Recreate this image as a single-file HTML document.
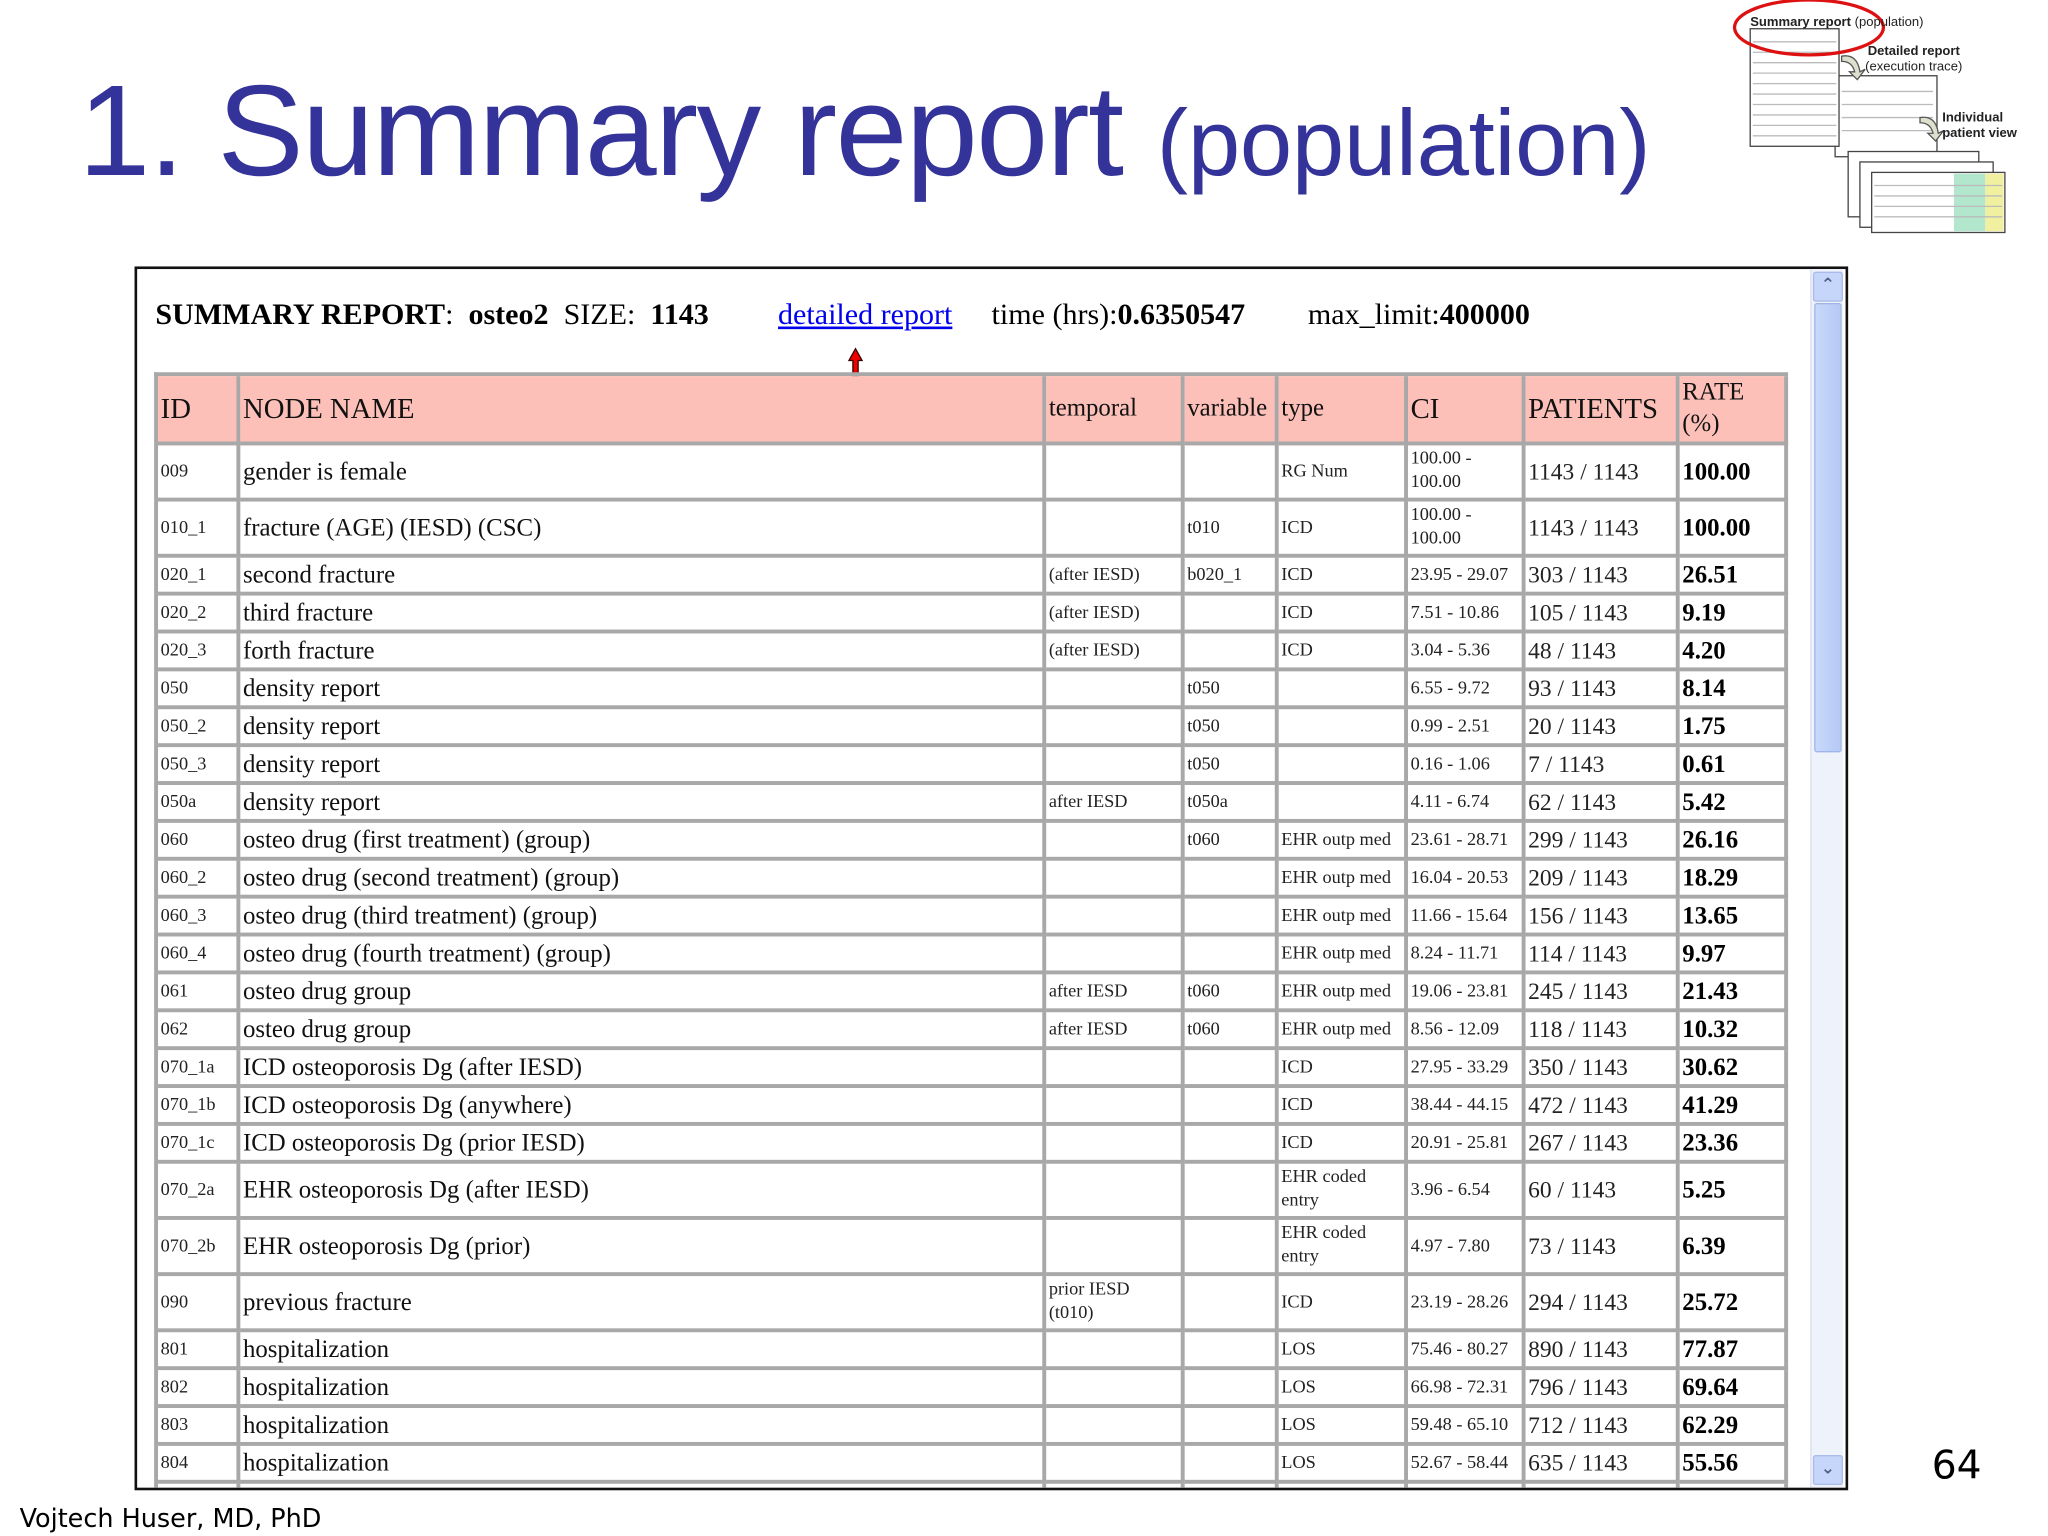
<!DOCTYPE html>
<html><head><meta charset="utf-8"><style>
html,body{margin:0;padding:0;background:#fff;}
body{width:2048px;height:1536px;overflow:hidden;position:relative;}
#w{position:absolute;left:0;top:0;width:1568px;height:1176px;transform:scale(1.306122);transform-origin:0 0;}
.t1{position:absolute;left:60px;top:43px;font-family:"Liberation Sans",sans-serif;color:#333399;font-size:99px;white-space:nowrap;letter-spacing:-1.2px;}
.t1 span{font-size:72px;letter-spacing:-0.2px;}
#frame{position:absolute;left:103px;top:204px;width:1308px;height:933px;border:2px solid #111;overflow:hidden;background:#fff;}
#sb{position:absolute;right:2px;top:0;width:24px;height:933px;background:#eef2fb;border-left:1px solid #dde;}
#sb .thumb{position:absolute;left:2px;top:26px;width:19px;height:342px;background:linear-gradient(90deg,#c9d8fb,#b5c9f5);border:1px solid #9fb4e8;border-radius:2px;}
#sb .btn{position:absolute;left:1px;width:21px;height:21px;background:#c6d6fa;border:1px solid #a9bbe8;border-radius:2px;color:#4d6185;font:bold 13px "DejaVu Sans",sans-serif;text-align:center;line-height:20px;}
.hdr{position:absolute;left:14px;top:22px;font-family:"Liberation Serif",serif;font-size:23px;white-space:nowrap;color:#000;}
.hdr a{color:#00e;text-decoration:underline;}
.hdr i{font-style:normal;display:inline-block;}
table{position:absolute;left:13px;top:79px;border-collapse:separate;border-spacing:0;table-layout:fixed;width:1248px;font-family:"Liberation Serif",serif;border-top:3px solid #a8a8a8;border-left:3px solid #a8a8a8;}
td{border-right:3px solid #a8a8a8;border-bottom:3px solid #a8a8a8;padding:0 2px;vertical-align:middle;white-space:nowrap;overflow:hidden;font-size:14px;line-height:17px;color:#222;}
tr.h td{background:#fcc0b8;height:50px;font-size:22px;line-height:24px;color:#111;}
tr.h td.s{font-size:19px;}
tr.n td{height:26px;}
tr.t td{height:40px;}
td.nm{font-size:19px;color:#111;}
td.pt{font-size:18px;color:#222;}
td.rt{font-size:19px;font-weight:bold;color:#000;}
td.ci{font-size:14px;white-space:normal;line-height:18px;}
.foot{position:absolute;left:15px;top:1151px;font-family:"DejaVu Sans",sans-serif;font-size:19.5px;color:#000;}
.pg{position:absolute;left:1479px;top:1105px;font-family:"DejaVu Sans",sans-serif;font-size:30px;color:#000;}
</style></head><body><div id="w">
<div class="t1">1. Summary report <span>(population)</span></div>

<svg style="position:absolute;left:1320px;top:0" width="248" height="185" viewBox="0 0 248 185">
<g stroke="#444" fill="#fff">
<rect x="85" y="58" width="78" height="62"/>
<rect x="95" y="116" width="100" height="50"/>
<rect x="104" y="124" width="102" height="50"/>
<rect x="113" y="132" width="102" height="46"/>
<rect x="20" y="22" width="68" height="90"/>
</g>
<rect x="176" y="133" width="24" height="44" fill="#9fe0c0" opacity=".8"/>
<rect x="200" y="133" width="14" height="44" fill="#f0f0a0"/>
<g stroke="#bbb" stroke-width="1">
<line x1="22" y1="32" x2="86" y2="32"/><line x1="22" y1="40" x2="86" y2="40"/><line x1="22" y1="48" x2="86" y2="48"/><line x1="22" y1="56" x2="86" y2="56"/><line x1="22" y1="64" x2="86" y2="64"/><line x1="22" y1="72" x2="86" y2="72"/><line x1="22" y1="80" x2="86" y2="80"/><line x1="22" y1="88" x2="86" y2="88"/><line x1="22" y1="96" x2="86" y2="96"/><line x1="22" y1="104" x2="86" y2="104"/>
<line x1="90" y1="70" x2="160" y2="70"/><line x1="90" y1="80" x2="160" y2="80"/><line x1="90" y1="90" x2="160" y2="90"/><line x1="90" y1="100" x2="160" y2="100"/>
<line x1="115" y1="142" x2="213" y2="142"/><line x1="115" y1="150" x2="213" y2="150"/><line x1="115" y1="158" x2="213" y2="158"/><line x1="115" y1="166" x2="213" y2="166"/>
</g>
<path d="M90 43 q12 -2 14 12 l4 -2 -6 8 -6 -6 4 0 q-2 -8 -10 -8z" fill="#dde0cc" stroke="#555"/>
<path d="M150 90 q12 -2 14 12 l4 -2 -6 8 -6 -6 4 0 q-2 -8 -10 -8z" fill="#dde0cc" stroke="#555"/>
<ellipse cx="65" cy="21" rx="57" ry="21" fill="none" stroke="#d11" stroke-width="2.5"/>
<text x="20" y="20" font-family="Liberation Sans,sans-serif" font-size="10" font-weight="bold" fill="#222">Summary report <tspan font-weight="normal">(population)</tspan></text>
<text x="110" y="42" font-family="Liberation Sans,sans-serif" font-size="10" font-weight="bold" fill="#222">Detailed report</text>
<text x="108" y="54" font-family="Liberation Sans,sans-serif" font-size="10" fill="#222">(execution trace)</text>
<text x="167" y="93" font-family="Liberation Sans,sans-serif" font-size="10" font-weight="bold" fill="#222">Individual</text>
<text x="167" y="105" font-family="Liberation Sans,sans-serif" font-size="10" font-weight="bold" fill="#222">patient view</text>
</svg>

<div id="frame">
<div class="hdr"><b>SUMMARY REPORT</b>:&nbsp; <b>osteo2</b>&nbsp; SIZE:&nbsp; <b>1143</b><i style="width:53px"></i><a>detailed report</a><i style="width:30px"></i>time (hrs):<b>0.6350547</b><i style="width:48px"></i>max_limit:<b>400000</b></div>
<svg style="position:absolute;left:543px;top:60px" width="14" height="28"><path d="M7 1 L12 10 L9 10 L9 27 L5 27 L5 10 L2 10 Z" fill="#e00" stroke="#300" stroke-width="1"/></svg>
<table>
<colgroup><col style="width:63px"><col style="width:617px"><col style="width:106px"><col style="width:72px"><col style="width:99px"><col style="width:90px"><col style="width:118px"><col style="width:83px"></colgroup>
<tr class="h"><td>ID</td><td>NODE NAME</td><td class="s">temporal</td><td class="s">variable</td><td class="s">type</td><td>CI</td><td>PATIENTS</td><td class="s" style="white-space:normal">RATE (%)</td></tr>
<tr class="t"><td>009</td><td class="nm">gender is female</td><td></td><td></td><td>RG Num</td><td class="ci">100.00 - 100.00</td><td class="pt">1143 / 1143</td><td class="rt">100.00</td></tr>
<tr class="t"><td>010_1</td><td class="nm">fracture (AGE) (IESD) (CSC)</td><td></td><td>t010</td><td>ICD</td><td class="ci">100.00 - 100.00</td><td class="pt">1143 / 1143</td><td class="rt">100.00</td></tr>
<tr class="n"><td>020_1</td><td class="nm">second fracture</td><td>(after IESD)</td><td>b020_1</td><td>ICD</td><td>23.95 - 29.07</td><td class="pt">303 / 1143</td><td class="rt">26.51</td></tr>
<tr class="n"><td>020_2</td><td class="nm">third fracture</td><td>(after IESD)</td><td></td><td>ICD</td><td>7.51 - 10.86</td><td class="pt">105 / 1143</td><td class="rt">9.19</td></tr>
<tr class="n"><td>020_3</td><td class="nm">forth fracture</td><td>(after IESD)</td><td></td><td>ICD</td><td>3.04 - 5.36</td><td class="pt">48 / 1143</td><td class="rt">4.20</td></tr>
<tr class="n"><td>050</td><td class="nm">density report</td><td></td><td>t050</td><td></td><td>6.55 - 9.72</td><td class="pt">93 / 1143</td><td class="rt">8.14</td></tr>
<tr class="n"><td>050_2</td><td class="nm">density report</td><td></td><td>t050</td><td></td><td>0.99 - 2.51</td><td class="pt">20 / 1143</td><td class="rt">1.75</td></tr>
<tr class="n"><td>050_3</td><td class="nm">density report</td><td></td><td>t050</td><td></td><td>0.16 - 1.06</td><td class="pt">7 / 1143</td><td class="rt">0.61</td></tr>
<tr class="n"><td>050a</td><td class="nm">density report</td><td>after IESD</td><td>t050a</td><td></td><td>4.11 - 6.74</td><td class="pt">62 / 1143</td><td class="rt">5.42</td></tr>
<tr class="n"><td>060</td><td class="nm">osteo drug (first treatment) (group)</td><td></td><td>t060</td><td>EHR outp med</td><td>23.61 - 28.71</td><td class="pt">299 / 1143</td><td class="rt">26.16</td></tr>
<tr class="n"><td>060_2</td><td class="nm">osteo drug (second treatment) (group)</td><td></td><td></td><td>EHR outp med</td><td>16.04 - 20.53</td><td class="pt">209 / 1143</td><td class="rt">18.29</td></tr>
<tr class="n"><td>060_3</td><td class="nm">osteo drug (third treatment) (group)</td><td></td><td></td><td>EHR outp med</td><td>11.66 - 15.64</td><td class="pt">156 / 1143</td><td class="rt">13.65</td></tr>
<tr class="n"><td>060_4</td><td class="nm">osteo drug (fourth treatment) (group)</td><td></td><td></td><td>EHR outp med</td><td>8.24 - 11.71</td><td class="pt">114 / 1143</td><td class="rt">9.97</td></tr>
<tr class="n"><td>061</td><td class="nm">osteo drug group</td><td>after IESD</td><td>t060</td><td>EHR outp med</td><td>19.06 - 23.81</td><td class="pt">245 / 1143</td><td class="rt">21.43</td></tr>
<tr class="n"><td>062</td><td class="nm">osteo drug group</td><td>after IESD</td><td>t060</td><td>EHR outp med</td><td>8.56 - 12.09</td><td class="pt">118 / 1143</td><td class="rt">10.32</td></tr>
<tr class="n"><td>070_1a</td><td class="nm">ICD osteoporosis Dg (after IESD)</td><td></td><td></td><td>ICD</td><td>27.95 - 33.29</td><td class="pt">350 / 1143</td><td class="rt">30.62</td></tr>
<tr class="n"><td>070_1b</td><td class="nm">ICD osteoporosis Dg (anywhere)</td><td></td><td></td><td>ICD</td><td>38.44 - 44.15</td><td class="pt">472 / 1143</td><td class="rt">41.29</td></tr>
<tr class="n"><td>070_1c</td><td class="nm">ICD osteoporosis Dg (prior IESD)</td><td></td><td></td><td>ICD</td><td>20.91 - 25.81</td><td class="pt">267 / 1143</td><td class="rt">23.36</td></tr>
<tr class="t"><td>070_2a</td><td class="nm">EHR osteoporosis Dg (after IESD)</td><td></td><td></td><td class="ci">EHR coded entry</td><td>3.96 - 6.54</td><td class="pt">60 / 1143</td><td class="rt">5.25</td></tr>
<tr class="t"><td>070_2b</td><td class="nm">EHR osteoporosis Dg (prior)</td><td></td><td></td><td class="ci">EHR coded entry</td><td>4.97 - 7.80</td><td class="pt">73 / 1143</td><td class="rt">6.39</td></tr>
<tr class="t"><td>090</td><td class="nm">previous fracture</td><td class="ci">prior IESD (t010)</td><td></td><td>ICD</td><td>23.19 - 28.26</td><td class="pt">294 / 1143</td><td class="rt">25.72</td></tr>
<tr class="n"><td>801</td><td class="nm">hospitalization</td><td></td><td></td><td>LOS</td><td>75.46 - 80.27</td><td class="pt">890 / 1143</td><td class="rt">77.87</td></tr>
<tr class="n"><td>802</td><td class="nm">hospitalization</td><td></td><td></td><td>LOS</td><td>66.98 - 72.31</td><td class="pt">796 / 1143</td><td class="rt">69.64</td></tr>
<tr class="n"><td>803</td><td class="nm">hospitalization</td><td></td><td></td><td>LOS</td><td>59.48 - 65.10</td><td class="pt">712 / 1143</td><td class="rt">62.29</td></tr>
<tr class="n"><td>804</td><td class="nm">hospitalization</td><td></td><td></td><td>LOS</td><td>52.67 - 58.44</td><td class="pt">635 / 1143</td><td class="rt">55.56</td></tr>
<tr class="n"><td>805</td><td class="nm">hospitalization</td><td></td><td></td><td>LOS</td><td></td><td class="pt"></td><td class="rt"></td></tr>
</table>
<div id="sb"><div class="btn" style="top:2px">&#8963;</div><div class="thumb"></div><div class="btn" style="top:908px">&#8964;</div></div>
</div>

<div class="pg">64</div>
<div class="foot">Vojtech Huser, MD, PhD</div>
</div></body></html>
